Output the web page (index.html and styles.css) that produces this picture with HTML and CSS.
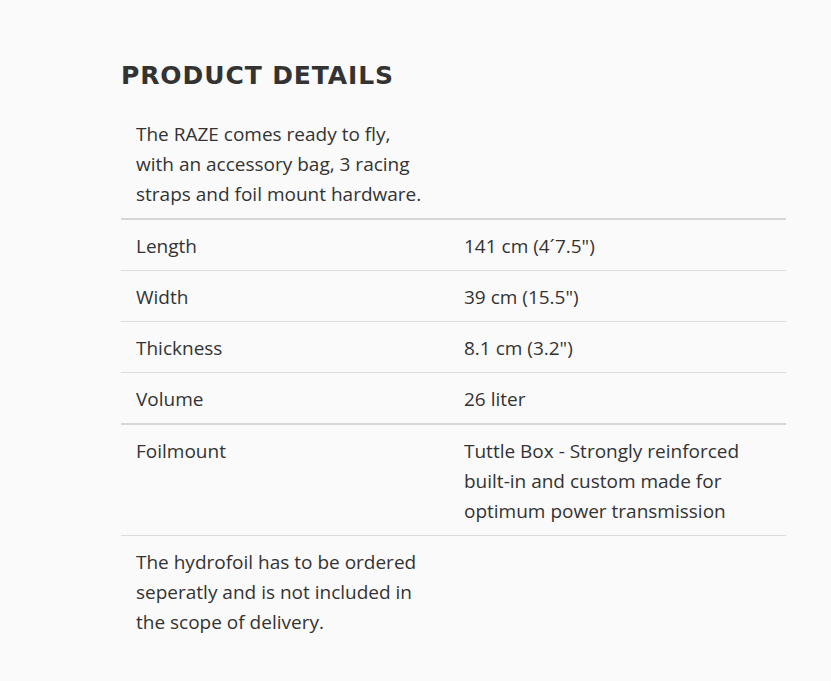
FILE: index.html
```html
<!DOCTYPE html>
<html>
<head>
<meta charset="utf-8">
<link rel="stylesheet" href="styles.css">
</head>
<body>
<section class="details">
  <h2 class="title">PRODUCT DETAILS</h2>
  <table class="specs">
    <colgroup>
      <col class="col-label">
      <col class="col-value">
    </colgroup>
    <tr class="row intro">
      <td class="cell">The RAZE comes ready to fly, with an accessory bag, 3 racing straps and foil mount hardware.</td>
      <td class="cell"></td>
    </tr>
    <tr class="row">
      <td class="cell">Length</td>
      <td class="cell">141 cm (4´7.5")</td>
    </tr>
    <tr class="row">
      <td class="cell">Width</td>
      <td class="cell">39 cm (15.5")</td>
    </tr>
    <tr class="row">
      <td class="cell">Thickness</td>
      <td class="cell">8.1 cm (3.2")</td>
    </tr>
    <tr class="row">
      <td class="cell">Volume</td>
      <td class="cell">26 liter</td>
    </tr>
    <tr class="row group">
      <td class="cell">Foilmount</td>
      <td class="cell">Tuttle Box - Strongly reinforced built-in and custom made for optimum power transmission</td>
    </tr>
    <tr class="row last">
      <td class="cell">The hydrofoil has to be ordered seperatly and is not included in the scope of delivery.</td>
      <td class="cell"></td>
    </tr>
  </table>
</section>
</body>
</html>
```
FILE: styles.css
```css
html, body {
  margin: 0;
  padding: 0;
  background: #fafafa;
}
body {
  font-family: "Open Sans", "Noto Sans", sans-serif;
  color: #333;
}
.details {
  width: 665px;
  margin-left: 121px;
  padding-top: 61px;
}
.title {
  margin: 0 0 17px 0;
  font-family: "DejaVu Sans", sans-serif;
  font-weight: bold;
  font-size: 25px;
  line-height: 30px;
  color: #333;
  letter-spacing: 0.9px;
}
.specs {
  width: 665px;
  border-collapse: collapse;
  table-layout: fixed;
}
.col-label {
  width: 328px;
}
.cell {
  padding: 11px 15px 9px;
  font-size: 19px;
  line-height: 30px;
  vertical-align: top;
  border-top: 1px solid #dcdcdc;
  hyphens: manual;
}
.intro .cell {
  border-top: none;
  border-bottom: 2px solid #d6d6d6;
}
.intro .cell:first-child {
  padding-right: 24px;
}
.group .cell {
  border-top: 2px solid #d6d6d6;
  border-bottom: 1px solid #dcdcdc;
}
.last .cell {
  border-top: none;
}
```
